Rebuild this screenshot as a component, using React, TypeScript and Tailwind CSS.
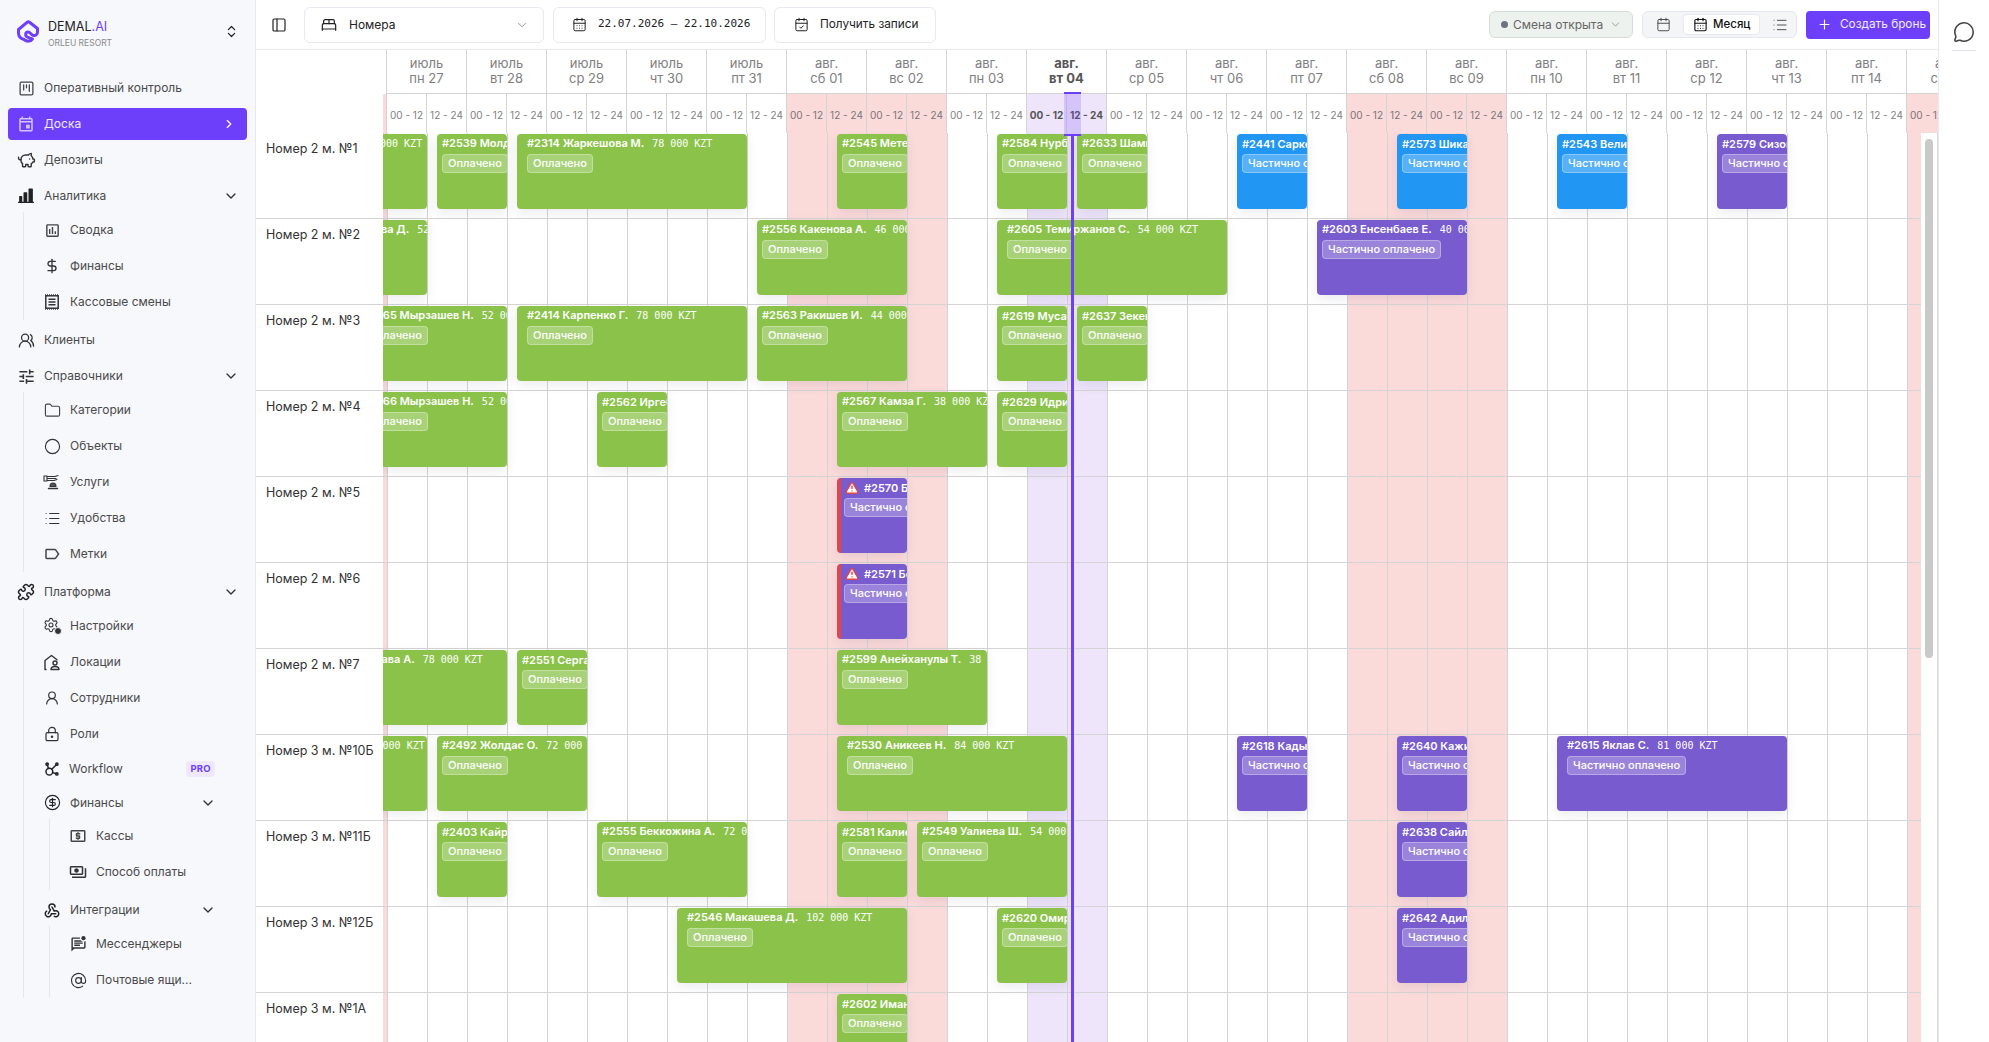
import {
  AtSign,
  BedDouble,
  Calendar,
  CalendarCheck,
  CalendarDays,
  ChevronDown,
  ChevronRight,
  ChevronsUpDown,
  Circle,
  CircleDollarSign,
  DollarSign,
  Folder,
  List,
  LockKeyhole,
  MessageCircle,
  PanelLeft,
  PiggyBank,
  Plus,
  Puzzle,
  Settings,
  SquareKanban,
  TriangleAlert,
  UserRound,
  UsersRound,
} from "lucide-react";
import type { ReactNode } from "react";
import {
  MdOutlineAssessment,
  MdOutlineEvent,
  MdOutlineLabel,
  MdOutlineLocalAtm,
  MdOutlineMarkUnreadChatAlt,
  MdOutlinePayments,
  MdTune,
} from "react-icons/md";
import { PiChartBarFill } from "react-icons/pi";
import { TbAffiliate, TbWebhook } from "react-icons/tb";

const sans = "font-['Inter','Noto_Sans',sans-serif]";
const mono = "font-['DejaVu_Sans_Mono','Liberation_Mono',monospace]";

const DAY = 80;
const CELL = 40;

const days = [
  ["июль", "пн 27"],
  ["июль", "вт 28"],
  ["июль", "ср 29"],
  ["июль", "чт 30"],
  ["июль", "пт 31"],
  ["авг.", "сб 01"],
  ["авг.", "вс 02"],
  ["авг.", "пн 03"],
  ["авг.", "вт 04"],
  ["авг.", "ср 05"],
  ["авг.", "чт 06"],
  ["авг.", "пт 07"],
  ["авг.", "сб 08"],
  ["авг.", "вс 09"],
  ["авг.", "пн 10"],
  ["авг.", "вт 11"],
  ["авг.", "ср 12"],
  ["авг.", "чт 13"],
  ["авг.", "пт 14"],
  ["авг.", "сб 15"],
];
const TODAY = 8;
const isWeekend = (day: number) => day % 7 === 5 || day % 7 === 6;

const rooms = [
  "Номер 2 м. №1",
  "Номер 2 м. №2",
  "Номер 2 м. №3",
  "Номер 2 м. №4",
  "Номер 2 м. №5",
  "Номер 2 м. №6",
  "Номер 2 м. №7",
  "Номер 3 м. №10Б",
  "Номер 3 м. №11Б",
  "Номер 3 м. №12Б",
  "Номер 3 м. №1А",
];

type Status = "paid" | "blue" | "part";
type Booking = { row: number; a: number; b: number; name: string; sum?: string; status?: Status; alert?: boolean };

// a / b are half-day cells counted from 27 July
const bookings: Booking[] = [
  { row: 0, a: -3, b: 1, name: "#2310 Сак Д.", sum: "78 000 KZT" },
  { row: 0, a: 1, b: 3, name: "#2539 Молдабекова", sum: "52 000 KZT" },
  { row: 0, a: 3, b: 9, name: "#2314 Жаркешова М.", sum: "78 000 KZT" },
  { row: 0, a: 11, b: 13, name: "#2545 Метеева", sum: "26 000 KZT" },
  { row: 0, a: 15, b: 17, name: "#2584 Нурбеков", sum: "26 000 KZT" },
  { row: 0, a: 17, b: 19, name: "#2633 Шамшиев", sum: "26 000 KZT" },
  { row: 0, a: 21, b: 23, name: "#2441 Саркенов", status: "blue" },
  { row: 0, a: 25, b: 27, name: "#2573 Шикасова", status: "blue" },
  { row: 0, a: 29, b: 31, name: "#2543 Велиева", status: "blue" },
  { row: 0, a: 33, b: 35, name: "#2579 Сизова", status: "part" },
  { row: 1, a: -3, b: 1, name: "#2558 Жанабергева Д.", sum: "52 000 KZT" },
  { row: 1, a: 9, b: 13, name: "#2556 Какенова А.", sum: "46 000 KZT" },
  { row: 1, a: 15, b: 21, name: "#2605 Темиржанов С.", sum: "54 000 KZT" },
  { row: 1, a: 23, b: 27, name: "#2603 Енсенбаев Е.", sum: "40 000 KZT", status: "part" },
  { row: 2, a: -1, b: 3, name: "#2565 Мырзашев Н.", sum: "52 000 KZT" },
  { row: 2, a: 3, b: 9, name: "#2414 Карпенко Г.", sum: "78 000 KZT" },
  { row: 2, a: 9, b: 13, name: "#2563 Ракишев И.", sum: "44 000 KZT" },
  { row: 2, a: 15, b: 17, name: "#2619 Мусаев" },
  { row: 2, a: 17, b: 19, name: "#2637 Зекенов" },
  { row: 3, a: -1, b: 3, name: "#2566 Мырзашев Н.", sum: "52 000 KZT" },
  { row: 3, a: 5, b: 7, name: "#2562 Иргебаев" },
  { row: 3, a: 11, b: 15, name: "#2567 Камза Г.", sum: "38 000 KZT" },
  { row: 3, a: 15, b: 17, name: "#2629 Идрисов" },
  { row: 4, a: 11, b: 13, name: "#2570 Бекова", status: "part", alert: true },
  { row: 5, a: 11, b: 13, name: "#2571 Бекова", status: "part", alert: true },
  { row: 6, a: -3, b: 3, name: "#2550 Абдурахмава А.", sum: "78 000 KZT" },
  { row: 6, a: 3, b: 5, name: "#2551 Сергазин" },
  { row: 6, a: 11, b: 15, name: "#2599 Анейханулы Т.", sum: "38 000 KZT" },
  { row: 7, a: -3, b: 1, name: "#2480 Сак Д.", sum: "72 000 KZT" },
  { row: 7, a: 1, b: 5, name: "#2492 Жолдас О.", sum: "72 000 KZT" },
  { row: 7, a: 11, b: 17, name: "#2530 Аникеев Н.", sum: "84 000 KZT" },
  { row: 7, a: 21, b: 23, name: "#2618 Кадыров", status: "part" },
  { row: 7, a: 25, b: 27, name: "#2640 Кажибаев", status: "part" },
  { row: 7, a: 29, b: 35, name: "#2615 Яклав С.", sum: "81 000 KZT", status: "part" },
  { row: 8, a: 1, b: 3, name: "#2403 Кайратов" },
  { row: 8, a: 5, b: 9, name: "#2555 Беккожина А.", sum: "72 000 KZT" },
  { row: 8, a: 11, b: 13, name: "#2581 Калиев" },
  { row: 8, a: 13, b: 17, name: "#2549 Уалиева Ш.", sum: "54 000 KZT" },
  { row: 8, a: 25, b: 27, name: "#2638 Сайлауов", status: "part" },
  { row: 9, a: 7, b: 13, name: "#2546 Макашева Д.", sum: "102 000 KZT" },
  { row: 9, a: 15, b: 17, name: "#2620 Омиров" },
  { row: 9, a: 25, b: 27, name: "#2642 Адилов", status: "part" },
  { row: 10, a: 11, b: 13, name: "#2602 Иманов" },
];

const cardColor: Record<Status, string> = {
  paid: "bg-[#8bc34a]",
  blue: "bg-[#2196f3]",
  part: "bg-[#785bcf]",
};

function BookingCard({ booking }: { booking: Booking }) {
  const { row, a, b, name, sum, status = "paid", alert } = booking;
  const left = 4 + a * CELL + 10;
  const width = (b - a) * CELL - 10;
  const wide = b - a >= 6;
  return (
    <div
      className={`absolute z-10 h-[75px] overflow-hidden rounded-[4px] shadow-[0_4px_12px_rgba(30,40,80,0.09)] ${cardColor[status]} ${
        alert ? "border-l-4 border-[#e0474c] pl-[3px]" : wide ? "pl-[10px]" : "pl-[5px]"
      }`}
      style={{ left, width, top: 1 + row * 86 }}
    >
      <div className="flex h-[17px] items-end gap-[5px] whitespace-nowrap text-[11px] leading-[14px] font-semibold text-white">
        {alert && <TriangleAlert size={14} strokeWidth={2.4} className="ml-[1px] shrink-0 fill-white text-[#e0474c]" />}
        <span>
          {name}
          {sum && <span className={`${mono} ml-[8px] text-[10px] font-normal`}>{sum}</span>}
        </span>
      </div>
      <div className="mt-[3px] flex h-[19px] w-fit items-center rounded-[4px] border border-white/30 bg-white/25 px-[5px] text-[11px] font-medium whitespace-nowrap text-white">
        {status === "paid" ? "Оплачено" : "Частично оплачено"}
      </div>
    </div>
  );
}

function DemalLogo() {
  return (
    <svg width="24" height="26" viewBox="0 0 24 26" fill="none" stroke="#6d3ffb" strokeWidth="3" strokeLinecap="round" strokeLinejoin="round">
      <path d="M8 21.500C4.500 20.500 2.500 18 2.500 15V11.500L11 4.300C11.700 3.700 12.800 3.700 13.500 4.300L21.500 10.500V14C21.500 16.500 19.500 18 17.500 17.500C15 16.900 14.500 14 12 14C9.500 14 9 17 10.500 18.500C12 20 15 20 16.500 21C15 23.500 11 24 8 21.500Z" />
    </svg>
  );
}

function ReceiptIcon() {
  return (
    <svg width="16" height="16" viewBox="0 0 16 16" fill="none" stroke="#333" strokeWidth="1.5">
      <rect x="1.8" y="1.8" width="12.4" height="12.4" />
      <path d="M4.500 5.200h7M4.500 8h7M4.500 10.800h7" />
      <path d="M1 .8h14M1 15.200h14" strokeDasharray="1 1" strokeWidth="1" />
    </svg>
  );
}

function ServiceIcon() {
  return (
    <svg width="18" height="16" viewBox="0 0 18 16" fill="none" stroke="#333" strokeWidth="1.1" strokeLinecap="round" strokeLinejoin="round">
      <path d="M1 2h3v5H1zM4 2.500h8l3-1M4 4.500h9M4 6.500h7l3-1" />
      <path d="M7 12.500c0-2 1.200-3.500 3-3.500s3 1.500 3 3.500z" fill="#555" />
      <path d="M5.500 14.500h9" strokeWidth="1.5" />
    </svg>
  );
}

function LocationIcon() {
  return (
    <svg width="18" height="18" viewBox="0 0 18 18" fill="none" stroke="#333" strokeWidth="1.4" strokeLinecap="round" strokeLinejoin="round">
      <path d="M3 16.500H2V7.500L8.500 2.500L14 6.800" />
      <circle cx="12" cy="10" r="2" />
      <path d="M8 16.500c0-2 1.800-3 4-3s4 1 4 3z" />
    </svg>
  );
}

function SettingsDotIcon() {
  return (
    <div className="relative h-[18px] w-[18px]">
      <Settings size={16} strokeWidth={1.6} className="text-[#333]" />
      <span className="absolute right-[-1px] bottom-0 h-[8px] w-[8px] rounded-full border border-[#f7f8fc] bg-[#333]" />
    </div>
  );
}

function NavRow({
  icon,
  label,
  height = 36,
  chevron,
}: {
  icon: ReactNode;
  label: string;
  height?: number;
  chevron?: boolean;
}) {
  return (
    <div className={`flex items-center ${chevron ? "pt-[2px]" : ""}`} style={{ height }}>
      <span className="flex w-[36px] shrink-0 items-center justify-center">{icon}</span>
      <span className="min-w-0 flex-1 truncate text-[12px] text-[#4a4a4a]">{label}</span>
      {chevron && <ChevronDown size={16} strokeWidth={2} className="mr-[8px] shrink-0 text-[#333]" />}
    </div>
  );
}

function SubTree({ children, className = "" }: { children: ReactNode; className?: string }) {
  return <div className={`ml-[15px] border-l border-[#e5e7eb] pl-[10px] ${className}`}>{children}</div>;
}

function Sidebar() {
  return (
    <aside className="flex h-full w-[256px] shrink-0 flex-col border-r border-[#e6e8f2] bg-[#f7f8fc] pr-[8px] pl-[8px]">
      <div className="flex h-[70px] shrink-0 items-start pt-[18px] pl-[8px]">
        <DemalLogo />
        <div className="ml-[8px] flex-1">
          <div className="pt-[1px] text-[12.5px] leading-[16px] text-[#222]">
            DEMAL<span className="text-[#6d3ffb]">.AI</span>
          </div>
          <div className="mt-[2px] text-[8.5px] leading-[12px] text-[#8a8a8a]">ORLEU RESORT</div>
        </div>
        <ChevronsUpDown size={15} strokeWidth={2} className="mt-[6px] mr-[8px] text-[#222]" />
      </div>

      <NavRow icon={<SquareKanban size={17} strokeWidth={1.8} className="text-[#444]" />} label="Оперативный контроль" />
      <div className="my-[2px] flex h-[32px] items-center rounded-[4px] bg-[#6d3ffb]">
        <span className="flex w-[36px] shrink-0 items-center justify-center">
          <MdOutlineEvent size={18} className="text-white/70" />
        </span>
        <span className="flex-1 text-[12px] text-white/90">Доска</span>
        <ChevronRight size={14} className="mr-[11px] text-white" />
      </div>
      <NavRow icon={<PiggyBank size={19} strokeWidth={1.8} className="text-[#333]" />} label="Депозиты" />
      <NavRow icon={<PiChartBarFill size={20} className="text-[#222]" />} label="Аналитика" height={34} chevron />
      <SubTree>
        <NavRow icon={<MdOutlineAssessment size={17} className="text-[#444]" />} label="Сводка" />
        <NavRow icon={<DollarSign size={16} className="text-[#333]" />} label="Финансы" />
        <NavRow icon={<ReceiptIcon />} label="Кассовые смены" />
      </SubTree>
      <div className="mt-[2px]">
        <NavRow icon={<UsersRound size={17} strokeWidth={1.8} className="text-[#333]" />} label="Клиенты" />
      </div>
      <NavRow icon={<MdTune size={19} className="text-[#333]" />} label="Справочники" height={34} chevron />
      <SubTree>
        <NavRow icon={<Folder size={17} strokeWidth={1.6} className="text-[#444]" />} label="Категории" />
        <NavRow icon={<Circle size={17} strokeWidth={1.6} className="text-[#333]" />} label="Объекты" />
        <NavRow icon={<ServiceIcon />} label="Услуги" />
        <NavRow icon={<List size={17} strokeWidth={1.6} className="text-[#333]" />} label="Удобства" />
        <NavRow icon={<MdOutlineLabel size={18} className="text-[#444]" />} label="Метки" />
      </SubTree>
      <div className="mt-[2px]">
        <NavRow icon={<Puzzle size={18} strokeWidth={2} className="text-[#222]" />} label="Платформа" height={34} chevron />
      </div>
      <SubTree className="pr-[23px]">
        <NavRow icon={<SettingsDotIcon />} label="Настройки" />
        <NavRow icon={<LocationIcon />} label="Локации" />
        <NavRow icon={<UserRound size={16} strokeWidth={1.8} className="text-[#333]" />} label="Сотрудники" />
        <NavRow icon={<LockKeyhole size={16} strokeWidth={1.8} className="text-[#333]" />} label="Роли" />
        <div className="flex h-[33px] items-center">
          <span className="flex w-[35px] shrink-0 items-center justify-center">
            <TbAffiliate size={18} className="text-[#222]" />
          </span>
          <span className="flex-1 text-[12px] text-[#4a4a4a]">Workflow</span>
          <span className="mr-[9px] rounded-[4px] bg-[#efe8fd] px-[4px] py-[1px] text-[9.5px] leading-[14px] font-bold tracking-[0.3px] text-[#6d3ffb]">
            PRO
          </span>
        </div>
        <NavRow icon={<CircleDollarSign size={17} strokeWidth={1.6} className="text-[#222]" />} label="Финансы" height={33} chevron />
        <SubTree>
          <NavRow icon={<MdOutlineLocalAtm size={18} className="text-[#444]" />} label="Кассы" />
          <NavRow icon={<MdOutlinePayments size={18} className="text-[#333]" />} label="Способ оплаты" />
        </SubTree>
        <div className="mt-[2px]">
          <NavRow icon={<TbWebhook size={18} className="text-[#222]" />} label="Интеграции" height={34} chevron />
        </div>
        <SubTree>
          <NavRow icon={<MdOutlineMarkUnreadChatAlt size={17} className="text-[#333]" />} label="Мессенджеры" />
          <NavRow icon={<AtSign size={17} strokeWidth={1.6} className="text-[#333]" />} label="Почтовые ящи..." />
        </SubTree>
      </SubTree>
    </aside>
  );
}

function Toolbar() {
  return (
    <div className="flex h-[50px] shrink-0 items-center border-b border-[#e6e8f2] bg-white pr-[8px] text-[12px] text-[#222]">
      <PanelLeft size={16} strokeWidth={1.8} className="ml-[15px] text-[#222]" />
      <div className="ml-[17px] flex h-[36px] w-[240px] items-center rounded-[6px] border border-[#e6e8f2] pr-[14px] pl-[16px]">
        <BedDouble size={16} strokeWidth={1.8} />
        <span className="ml-[12px] flex-1">Номера</span>
        <ChevronDown size={14} strokeWidth={1.5} className="text-[#888]" />
      </div>
      <div className="ml-[9px] flex h-[36px] w-[213px] items-center rounded-[6px] border border-[#e6e8f2] pl-[18px]">
        <CalendarDays size={15} strokeWidth={1.6} />
        <span className={`${mono} ml-[11px] text-[11px] whitespace-nowrap`}>22.07.2026 – 22.10.2026</span>
      </div>
      <div className="ml-[8px] flex h-[36px] w-[162px] items-center rounded-[6px] border border-[#e6e8f2] pl-[19px]">
        <CalendarCheck size={15} strokeWidth={1.6} />
        <span className="ml-[11px] text-[11.8px]">Получить записи</span>
      </div>
      <div className="ml-auto flex h-[27px] w-[144px] items-center rounded-[6px] border border-[#d5ddd8] bg-[#eef2ee] pl-[11px] text-[#666]">
        <span className="h-[7px] w-[7px] rounded-full bg-[#6b7280]" />
        <span className="ml-[5px] flex-1 whitespace-nowrap">Смена открыта</span>
        <ChevronDown size={13} strokeWidth={1.5} className="mr-[10px] text-[#888]" />
      </div>
      <div className="ml-[9px] flex h-[27px] w-[155px] items-center rounded-[6px] border border-[#e5e7ee] bg-[#f4f5f7] pl-[13px]">
        <Calendar size={15} strokeWidth={1.5} className="text-[#444]" />
        <div className="ml-[12px] flex h-[21px] w-[77px] items-center rounded-[4px] border border-[#e8e9f0] bg-white pl-[9px] font-medium text-[#111]">
          <CalendarDays size={15} strokeWidth={1.8} />
          <span className="ml-[5px] text-[11.5px]">Месяц</span>
        </div>
        <List size={16} strokeWidth={1.4} className="ml-[12px] text-[#444]" />
      </div>
      <div className="ml-[9px] flex h-[28px] w-[124px] items-center rounded-[4px] bg-[#6d3ffb] pl-[11px] text-white/90">
        <Plus size={15} strokeWidth={1.8} className="text-white" />
        <span className="ml-[8px] text-[11.8px] whitespace-nowrap">Создать бронь</span>
      </div>
    </div>
  );
}

function Board() {
  const halfDays = days.flatMap((_, day) => [
    { day, label: "00 - 12" },
    { day, label: "12 - 24" },
  ]);
  return (
    <div className="relative min-h-0 flex-1 overflow-hidden bg-white">
      {/* day and half-day header */}
      <div className="flex h-[44px]">
        <div className="w-[130px] shrink-0" />
        {days.map(([month, date], i) => (
          <div
            key={date}
            className={`shrink-0 border-b border-l border-[#d4d4d4] pt-[6px] text-center text-[13px] leading-[15px] ${
              i === TODAY ? "font-bold text-[#555]" : "text-[#808080]"
            }`}
            style={{ width: DAY }}
          >
            <div>{month}</div>
            <div>{date}</div>
          </div>
        ))}
      </div>
      <div className="flex h-[39px]">
        <div className="w-[127px] shrink-0" />
        <div className="w-[3px] shrink-0 bg-[#fbdada]" />
        {halfDays.map(({ day, label }, i) => (
          <div
            key={i}
            className={`flex shrink-0 items-center justify-center border-l border-[#d4d4d4] pt-[3px] text-[10px] whitespace-nowrap ${
              day === TODAY
                ? "bg-[#eee5fb] font-bold text-[#555]"
                : isWeekend(day)
                  ? "bg-[#fbdada] text-[#777]"
                  : "text-[#808080]"
            }`}
            style={{ width: CELL }}
          >
            {label}
          </div>
        ))}
      </div>

      {/* rooms and timeline */}
      <div className="relative">
        <div className="absolute top-0 bottom-0 left-[127px] flex h-[1000px] w-[1700px]">
          <div className="w-[4px] shrink-0 bg-[#fbdada]" />
          {halfDays.map(({ day }, i) => (
            <div
              key={i}
              className={`h-full shrink-0 border-l border-[#d4d4d4] ${
                day === TODAY ? "bg-[#eee5fb]" : isWeekend(day) ? "bg-[#fbdada]" : ""
              }`}
              style={{ width: CELL }}
            />
          ))}
        </div>
        {rooms.map((room) => (
          <div key={room} className="relative h-[86px] border-b border-[#d4d4d4]">
            <div className="h-full w-[127px] bg-white pt-[8px] pl-[10px] text-[12.5px] leading-[16px] text-[#333]">{room}</div>
          </div>
        ))}
        <div className="absolute top-0 left-[127px] h-[1000px] w-[1700px] overflow-hidden">
          {bookings.map((booking) => (
            <BookingCard key={booking.name} booking={booking} />
          ))}
        </div>
      </div>

      {/* now marker */}
      <div className="absolute top-[42px] left-[808px] z-20 h-[44px] w-[17px] border-y-2 border-[#6d3ffb] bg-[#6d3ffb]/20" />
      <div className="absolute top-[86px] bottom-0 left-[815px] z-20 w-[3px] bg-[#6d3ffb]" />

      {/* scrollbar */}
      <div className="absolute top-[83px] right-0 bottom-0 z-20 w-[17px] border-r border-[#d8d8e4] bg-white">
        <div className="mx-auto mt-[6px] h-[519px] w-[8px] rounded-full bg-[#c9c9c9]" />
      </div>
    </div>
  );
}

export default function App() {
  return (
    <div className={`${sans} flex h-screen w-full overflow-hidden bg-white`}>
      <Sidebar />
      <main className="flex min-w-0 flex-1 flex-col">
        <Toolbar />
        <Board />
      </main>
      <aside className="flex w-[51px] shrink-0 flex-col items-center border-l border-[#e6e8f2] bg-white">
        <MessageCircle size={22} strokeWidth={1.7} className="mt-[21px] text-[#444]" />
        <div className="mt-[7px] h-px w-[24px] bg-[#e0e0e6]" />
      </aside>
    </div>
  );
}
